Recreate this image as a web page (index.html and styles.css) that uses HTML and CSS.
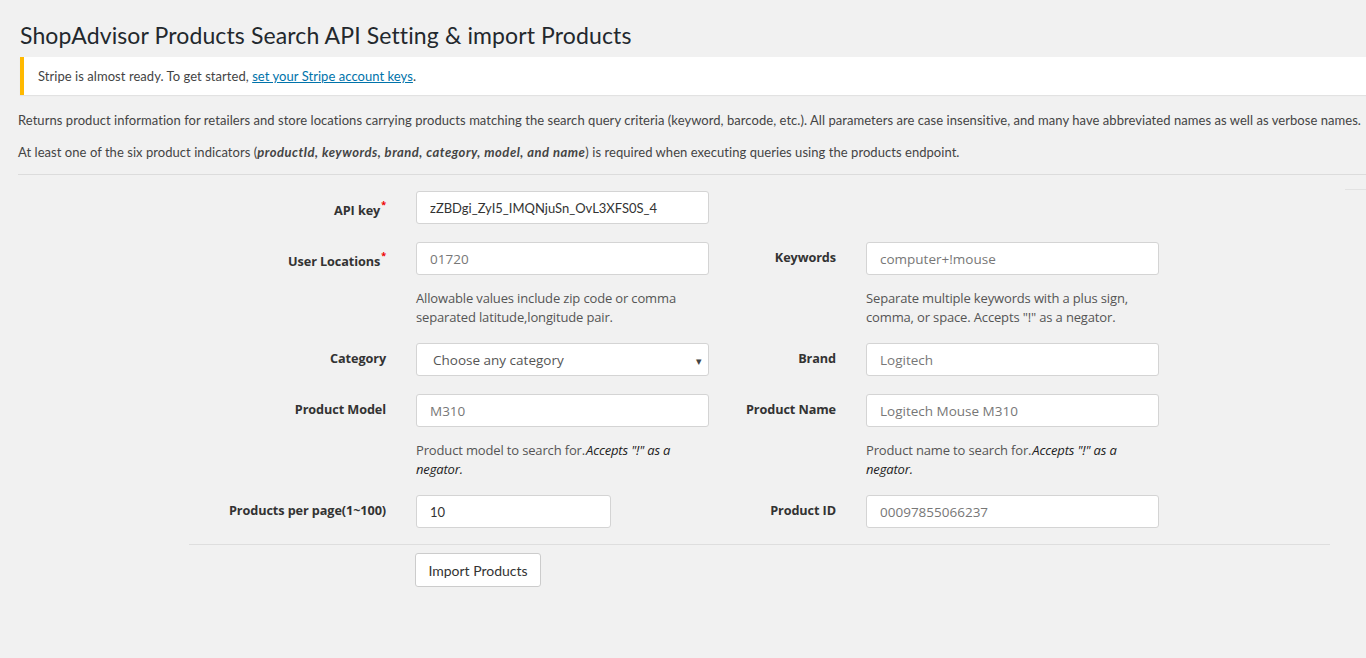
FILE: index.html
```html
<!DOCTYPE html>
<html>
<head>
<meta charset="utf-8">
<title>ShopAdvisor Products Search API Setting</title>
<link rel="stylesheet" href="styles.css">
</head>
<body>
<div class="wrap">
  <h1 class="page-title">ShopAdvisor Products Search API Setting &amp; import Products</h1>
  <div class="notice">
    <p>Stripe is almost ready. To get started, <a href="#">set your Stripe account keys</a>.</p>
  </div>
  <p class="intro intro-first">Returns product information for retailers and store locations carrying products matching the search query criteria (keyword, barcode, etc.). All parameters are case insensitive, and many have abbreviated names as well as verbose names.</p>
  <p class="intro">At least one of the six product indicators (<b class="em">productId, keywords, brand, category, model, and name</b>) is required when executing queries using the products endpoint.</p>
  <hr class="sep">
  <div class="edge"></div>

  <form class="api-form">
    <div class="row">
      <div class="group">
        <label class="lbl lbl-left lbl-req">API key<sup>*</sup></label>
        <div class="field">
          <input class="ctl ctl-filled" type="text" value="zZBDgi_ZyI5_IMQNjuSn_OvL3XFS0S_4">
        </div>
      </div>
    </div>

    <div class="row">
      <div class="group">
        <label class="lbl lbl-left lbl-req">User Locations<sup>*</sup></label>
        <div class="field">
          <input class="ctl" type="text" placeholder="01720">
          <p class="help">Allowable values include zip code or comma separated latitude,longitude pair.</p>
        </div>
      </div>
      <div class="group">
        <label class="lbl lbl-right">Keywords</label>
        <div class="field">
          <input class="ctl" type="text" placeholder="computer+!mouse">
          <p class="help">Separate multiple keywords with a plus sign, comma, or space. Accepts "!" as a negator.</p>
        </div>
      </div>
    </div>

    <div class="row">
      <div class="group">
        <label class="lbl lbl-left">Category</label>
        <div class="field">
          <div class="select">
            <span class="select-text">Choose any category</span>
            <span class="select-arrow">&#9662;</span>
          </div>
        </div>
      </div>
      <div class="group">
        <label class="lbl lbl-right">Brand</label>
        <div class="field">
          <input class="ctl" type="text" placeholder="Logitech">
        </div>
      </div>
    </div>

    <div class="row">
      <div class="group">
        <label class="lbl lbl-left">Product Model</label>
        <div class="field">
          <input class="ctl" type="text" placeholder="M310">
          <p class="help">Product model to search for.<i>Accepts "!" as a negator.</i></p>
        </div>
      </div>
      <div class="group">
        <label class="lbl lbl-right">Product Name</label>
        <div class="field">
          <input class="ctl" type="text" placeholder="Logitech Mouse M310">
          <p class="help">Product name to search for.<i>Accepts "!" as a negator.</i></p>
        </div>
      </div>
    </div>

    <div class="row row-last">
      <div class="group">
        <label class="lbl lbl-left">Products per page(1~100)</label>
        <div class="field">
          <input class="ctl ctl-short ctl-filled" type="text" value="10">
        </div>
      </div>
      <div class="group">
        <label class="lbl lbl-right">Product ID</label>
        <div class="field">
          <input class="ctl" type="text" placeholder="00097855066237">
        </div>
      </div>
    </div>

    <hr class="form-sep">
    <div class="actions">
      <button type="button" class="btn">Import Products</button>
    </div>
  </form>
</div>
</body>
</html>
```

FILE: styles.css
```css
html, body {
  margin: 0;
  padding: 0;
  background: #f1f1f1;
  overflow: hidden;
}

body {
  font-family: "Lato", "Noto Sans", sans-serif;
  font-size: 13px;
  color: #444;
}

.wrap {
  padding-left: 18px;
}

.page-title {
  margin: 21px 0 0 2px;
  font-size: 23px;
  font-weight: 400;
  line-height: 29px;
  letter-spacing: 0.12px;
  color: #23282d;
}

.notice {
  margin: 7px 0 0 2px;
  background: #fff;
  border-left: 4px solid #ffb900;
  box-shadow: 0 1px 1px rgba(0, 0, 0, 0.06);
  padding: 0 14px;
  height: 38px;
  display: flex;
  align-items: center;
}

.notice p {
  margin: 0;
  line-height: 20px;
  color: #444;
  letter-spacing: 0.05px;
}

.notice a {
  color: #0073aa;
  text-decoration: underline;
}

.intro {
  margin: 12px 0 0;
  line-height: 20px;
  white-space: nowrap;
  letter-spacing: 0.05px;
}

.intro .em {
  font-style: italic;
  font-weight: 700;
  letter-spacing: 0.5px;
}

.intro-first {
  margin-top: 15px;
}

.sep {
  margin: 12px 0 0;
  border: 0;
  border-top: 1px solid #dcdcdc;
  height: 0;
}

.edge {
  margin: 14px 0 0 auto;
  width: 21px;
  border-top: 1px solid #e2e2e2;
  height: 0;
}

.api-form {
  margin: 1px 0 0 171px;
  width: 1141px;
  font-family: "Open Sans", "Noto Sans", sans-serif;
}

.row {
  display: flex;
  margin-bottom: 18px;
}

.row-last {
  margin-bottom: 0;
}

.group {
  display: flex;
}

.lbl {
  box-sizing: border-box;
  text-align: right;
  padding-right: 30px;
  padding-top: 5px;
  line-height: 20px;
  font-weight: 700;
  font-size: 12.7px;
  letter-spacing: -0.1px;
  color: #333;
  white-space: nowrap;
}

.lbl-left {
  width: 227px;
}

.lbl-right {
  width: 157px;
}

.lbl-req {
  padding-top: 9px;
}

.lbl sup {
  color: #e00;
  font-size: 9px;
  line-height: 0;
  vertical-align: 7px;
  margin-left: 1px;
}

.field {
  width: 293px;
}

.ctl {
  display: block;
  box-sizing: border-box;
  width: 293px;
  height: 33px;
  margin: 0;
  padding: 0 13px;
  border: 1px solid #d4d4d4;
  border-radius: 3px;
  background: #fff;
  font-family: "Open Sans", "Noto Sans", sans-serif;
  font-size: 13.5px;
  color: #555;
  outline: none;
}

.ctl::placeholder {
  color: #777;
  opacity: 1;
}

.ctl-filled {
  font-family: "Lato", "Noto Sans", sans-serif;
  font-size: 13px;
  color: #333;
}

.ctl-short {
  width: 195px;
}

.select {
  box-sizing: border-box;
  width: 293px;
  height: 33px;
  border: 1px solid #d4d4d4;
  border-radius: 3px;
  background: #fff;
  display: flex;
  align-items: center;
  justify-content: space-between;
  padding: 1px 6px 0 16px;
  font-size: 13.5px;
  color: #555;
}

.select-arrow {
  font-size: 11px;
  color: #444;
}

.help {
  margin: 14px 0 -2px;
  line-height: 19px;
  font-size: 13px;
  letter-spacing: -0.15px;
  color: #555;
}

.help i {
  color: #222;
  margin-left: 1px;
}

.form-sep {
  margin: 16px 0 0;
  border: 0;
  border-top: 1px solid #dedede;
  height: 0;
}

.actions {
  padding: 8px 0 0 226px;
}

.btn {
  box-sizing: border-box;
  width: 126px;
  height: 34px;
  border: 1px solid #ccc;
  border-radius: 3px;
  background: #fff;
  font-family: "Lato", "Noto Sans", sans-serif;
  font-size: 14px;
  color: #333;
  padding: 0;
}
```
